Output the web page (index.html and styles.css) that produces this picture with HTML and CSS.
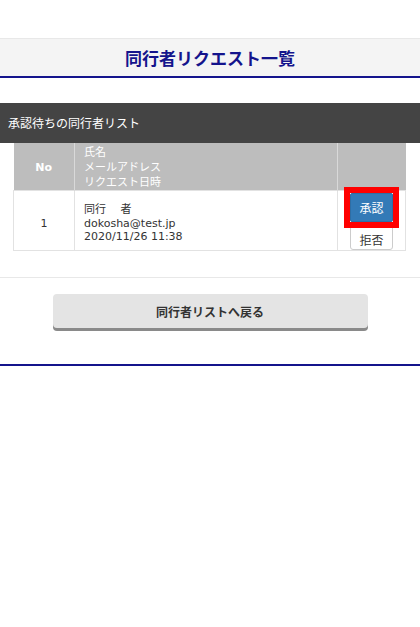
FILE: index.html
```html
<!DOCTYPE html>
<html lang="ja">
<head>
<meta charset="utf-8">
<title>同行者リクエスト一覧</title>
<link rel="stylesheet" href="styles.css">
</head>
<body>
<header class="page-header">
  <h1 class="page-title">同行者リクエスト一覧</h1>
</header>
<section class="section">
  <h2 class="section-title">承認待ちの同行者リスト</h2>
  <div class="table-wrap">
    <table class="req-table">
      <thead>
        <tr>
          <th class="col-no">No</th>
          <th class="col-info">氏名<br>メールアドレス<br>リクエスト日時</th>
          <th class="col-act"></th>
        </tr>
      </thead>
      <tbody>
        <tr>
          <td class="col-no">1</td>
          <td class="col-info">同行　 者<br>dokosha@test.jp<br>2020/11/26 11:38</td>
          <td class="col-act">
            <div class="btn-stack">
              <div class="approve-mark"><button class="btn btn-approve">承認</button></div>
              <button class="btn btn-reject">拒否</button>
            </div>
          </td>
        </tr>
      </tbody>
    </table>
  </div>
</section>
<div class="actions">
  <button class="btn-back">同行者リストへ戻る</button>
</div>
<div class="footer-line"></div>
</body>
</html>
```
FILE: styles.css
```css
html, body {
  margin: 0;
  padding: 0;
  background: #fff;
}
body {
  font-family: "DejaVu Sans", "Noto Sans CJK JP", sans-serif;
  color: #333;
  font-size: 11px;
}
.page-header {
  margin-top: 38px;
  border-top: 1px solid #e8e8e8;
  background: #f4f4f4;
  height: 37px;
  border-bottom: 2px solid #14148c;
  display: flex;
  align-items: center;
  justify-content: center;
}
.page-title {
  margin: 0;
  font-family: "Noto Sans CJK JP", sans-serif;
  font-size: 17px;
  font-weight: bold;
  color: #14148c;
}
.section {
  margin-top: 25px;
  border-bottom: 1px solid #e8e8e8;
  padding-bottom: 26px;
}
.section-title {
  margin: 0;
  background: #444;
  color: #fff;
  height: 40px;
  line-height: 40px;
  padding-left: 8px;
  font-family: "Noto Sans CJK JP", sans-serif;
  font-size: 12px;
  font-weight: normal;
}
.table-wrap {
  padding: 0 14px 0 13px;
}
.req-table {
  width: 100%;
  border-collapse: collapse;
  table-layout: fixed;
}
.req-table th,
.req-table td {
  box-sizing: border-box;
}
.req-table th {
  background: #bdbdbd;
  color: #fff;
  font-weight: normal;
  text-align: left;
  height: 47px;
  padding: 2px 9px 0;
  line-height: 15px;
  border-left: 1px solid #d9d9d9;
  border-right: 1px solid #d9d9d9;
  font-size: 11px;
  vertical-align: middle;
}
.req-table th:first-child { border-left: none; }
.req-table th:last-child { border-right: none; }
.req-table th.col-no {
  text-align: center;
  font-weight: bold;
}
.col-no { width: 61px; }
.col-act { width: 68px; }
.req-table td {
  height: 59px;
  padding: 6px 9px 0;
  border: 1px solid #e2e2e2;
  line-height: 13.5px;
  vertical-align: middle;
  color: #333;
}
.req-table td.col-no {
  text-align: center;
}
.req-table td.col-act {
  padding: 0;
  vertical-align: top;
}
.btn-stack {
  display: flex;
  flex-direction: column;
  align-items: center;
  padding-top: 2px;
}
.approve-mark {
  outline: 6px solid #ff0000;
  position: relative;
  z-index: 1;
  line-height: 0;
}
.btn {
  width: 43px;
  font-family: "Noto Sans CJK JP", sans-serif;
  font-size: 12px;
  padding: 0;
  margin: 0;
  box-sizing: border-box;
}
.btn-approve {
  height: 29px;
  background: #337ab7;
  color: #fff;
  border: 1px solid #2e6da4;
  border-radius: 2px;
}
.btn-reject {
  height: 28px;
  margin-top: 0;
  background: #fff;
  color: #333;
  border: 1px solid #ccc;
  border-radius: 3px;
  padding-top: 6px;
}
.actions {
  display: flex;
  justify-content: center;
  padding: 16px 0 36px;
}
.btn-back {
  width: 315px;
  height: 34px;
  background: #e4e4e4;
  border: none;
  border-radius: 4px;
  box-shadow: 0 3px 0 #8a8a8a;
  font-family: "Noto Sans CJK JP", sans-serif;
  font-size: 12px;
  font-weight: bold;
  color: #333;
  padding: 0;
}
.footer-line {
  height: 2px;
  background: #14148c;
}
```
